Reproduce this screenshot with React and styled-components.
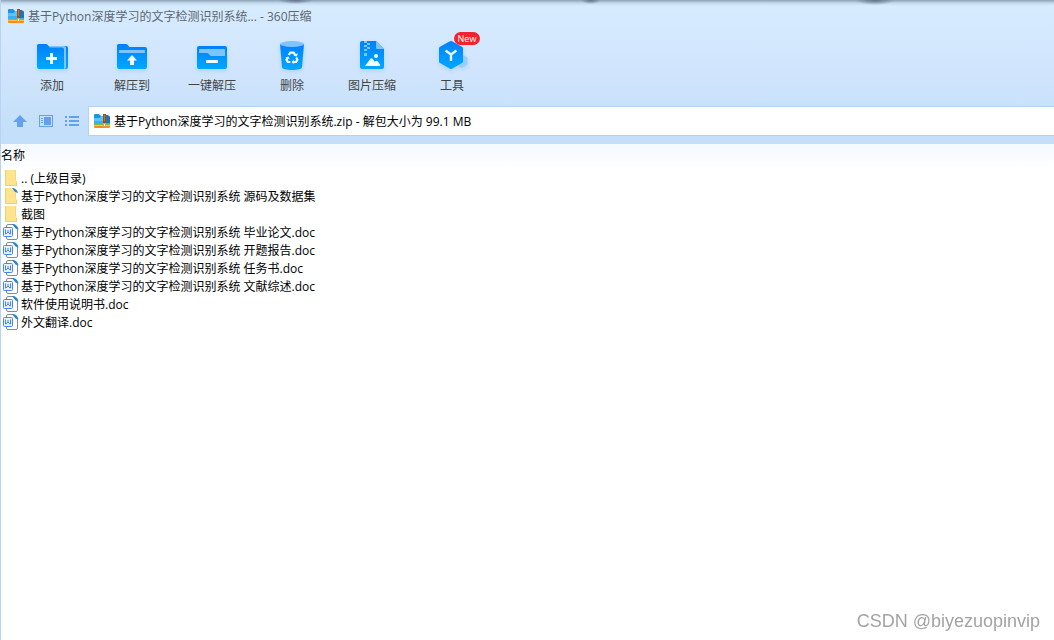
import { useId, useState } from "react"
import styled, { createGlobalStyle } from "styled-components"

const ARCHIVE = '基于Python深度学习的文字检测识别系统'

const files = [
  { name: '.. (上级目录)', type: 'folder' },
  { name: `${ARCHIVE} 源码及数据集`, type: 'folder', marked: true },
  { name: '截图', type: 'folder' },
  { name: `${ARCHIVE} 毕业论文.doc`, type: 'doc' },
  { name: `${ARCHIVE} 开题报告.doc`, type: 'doc' },
  { name: `${ARCHIVE} 任务书.doc`, type: 'doc' },
  { name: `${ARCHIVE} 文献综述.doc`, type: 'doc' },
  { name: '软件使用说明书.doc', type: 'doc' },
  { name: '外文翻译.doc', type: 'doc' },
]

const Gradient = ({ id }) => (
  <defs>
    <linearGradient id={id} x1="0" y1="0" x2="0" y2="1">
      <stop offset="0" stopColor="#0080ff" />
      <stop offset="1" stopColor="#00a8ff" />
    </linearGradient>
  </defs>
)

const AddIcon = () => {
  const id = useId()
  return (
    <svg width="32" height="32" viewBox="0 0 32 32" aria-hidden="true">
      <Gradient id={id} />
      <path d="M14 6h16a2 2 0 0 1 2 2v19a2 2 0 0 1-2 2H14z" fill={`url(#${id})`} />
      <path d="M12 6h16a2 2 0 0 1 2 2v19a2 2 0 0 1-2 2H12z" fill="#80c4ff" />
      <path d="M2.500 4H10a2 2 0 0 1 1.500.7l1.800 2.300a1.500 1.500 0 0 0 1.200.6H26a2 2 0 0 1 2 2V29H3a2 2 0 0 1-2-2V5.500A1.500 1.500 0 0 1 2.500 4z" fill={`url(#${id})`} />
      <path d="M14 13h3v4h4v3h-4v4h-3v-4h-4v-3h4z" fill="#f4fbff" />
    </svg>
  )
}

const ExtractIcon = () => {
  const id = useId()
  return (
    <svg width="32" height="32" viewBox="0 0 32 32" aria-hidden="true">
      <Gradient id={id} />
      <path d="M2.500 4H10a2 2 0 0 1 1.500.7L13 6.400A1.500 1.500 0 0 0 14 7h15a2 2 0 0 1 2 2v18a2 2 0 0 1-2 2H3a2 2 0 0 1-2-2V5.500A1.500 1.500 0 0 1 2.500 4z" fill={`url(#${id})`} />
      <path d="M3 11a1 1 0 0 1 1-1h24a1 1 0 0 1 1 1v2H3z" fill="#80c4ff" />
      <path d="M16 15l5 5.500h-3V25h-4v-4.500h-3z" fill="#f4fbff" />
    </svg>
  )
}

const OneClickIcon = () => {
  const id = useId()
  return (
    <svg width="32" height="32" viewBox="0 0 32 32" aria-hidden="true">
      <Gradient id={id} />
      <rect x="1" y="6" width="30" height="23" rx="2" fill={`url(#${id})`} />
      <path d="M3 10a1 1 0 0 1 1-1h24a1 1 0 0 1 1 1v6H15.500a2 2 0 0 1-1.400-.6l-1.600-1.700a2 2 0 0 0-1.500-.7H3z" fill="#80c4ff" />
      <rect x="10" y="20" width="12" height="3" rx="1" fill="#f4fbff" />
    </svg>
  )
}

const DeleteIcon = () => {
  const id = useId()
  return (
    <svg width="32" height="32" viewBox="0 0 32 32" aria-hidden="true">
      <Gradient id={id} />
      <path d="M4 4h24l-2 23.500C25.800 29 21 30 16 30S6.200 29 6 27.500z" fill={`url(#${id})`} />
      <ellipse cx="16" cy="4" rx="12" ry="3" fill="#80c4ff" />
      <g fill="none" stroke="#f0faff" strokeWidth="2.200">
        <path d="M12.800 15l1.500-2.400h3.400l1.500 2.400" />
        <path d="M20.200 17.500l1.200 2.200-1.300 2.300h-3" />
        <path d="M14.300 22h-2.500l-1.300-2.300 1.200-2.200" />
      </g>
      <path d="M17.400 15.800l3.700.6.500-3.500zM17.800 19.700L15.400 22l2.400 2.300zM9.400 17.600l3.100-1.200 1.100 2.900z" fill="#f0faff" />
    </svg>
  )
}

const ImageZipIcon = () => {
  const id = useId()
  return (
    <svg width="32" height="32" viewBox="0 0 32 32" aria-hidden="true">
      <Gradient id={id} />
      <path d="M6 1h14l8 8v18a2 2 0 0 1-2 2H6a2 2 0 0 1-2-2V3a2 2 0 0 1 2-2z" fill={`url(#${id})`} />
      <path d="M20 1l8 8h-7a1 1 0 0 1-1-1z" fill="#80c4ff" />
      <g fill="#80c4ff">
        <rect x="8" y="1" width="3" height="2" />
        <rect x="11" y="3" width="3" height="2" />
        <rect x="8" y="5" width="3" height="2" />
        <rect x="11" y="7" width="3" height="2" />
        <rect x="8" y="9" width="3" height="2" />
        <rect x="8" y="13" width="3" height="3" />
      </g>
      <circle cx="20" cy="16" r="2" fill="#f4fbff" />
      <path d="M9 26l5.300-7a1.500 1.500 0 0 1 2.400 0l2 2.700 1.200-.8a1.300 1.300 0 0 1 1.800.4L24 24.500c.5.900.1 1.500-.8 1.500z" fill="#f4fbff" />
    </svg>
  )
}

const ToolsIcon = () => {
  const id = useId()
  return (
    <svg width="32" height="32" viewBox="0 0 32 32" aria-hidden="true">
      <Gradient id={id} />
      <path d="M26 14.500l5.500 3v7L26 28l-6-3.500v-7z" fill="#9bcdfc" />
      <path d="M14 1.300a2 2 0 0 1 2 0l10 5.400a2 2 0 0 1 1 1.700v13a2 2 0 0 1-1 1.700l-10 5.600a2 2 0 0 1-2 0L4 23.100a2 2 0 0 1-1-1.700v-13a2 2 0 0 1 1-1.700z" fill={`url(#${id})`} />
      <path d="M9.500 10.500l5.500 4 5.500-4M15 14.500V21" fill="none" stroke="#e8f6ff" strokeWidth="2.400" />
    </svg>
  )
}

const ArchiveIcon = () => (
  <svg width="16" height="16" viewBox="0 0 16 16" aria-hidden="true">
    <path d="M0 2a1 1 0 0 1 1-1h4l2 2h8a1 1 0 0 1 1 1v8H0z" fill="#1e93de" />
    <path d="M0 5h6l1-2h8a1 1 0 0 1 1 1v7H0z" fill="#5ac4fa" />
    <path d="M0 8h16v3H0z" fill="#38b0f2" />
    <rect y="11" width="16" height="1" fill="#7ac143" />
    <path d="M0 12h16v2a1 1 0 0 1-1 1H1a1 1 0 0 1-1-1z" fill="#ff8a1c" />
    <rect y="12" width="16" height="1" fill="#ffc53a" />
    <path d="M12 2h2l2 2v6h-4z" fill="#2671b5" />
    <rect x="9" y="1" width="3" height="10" fill="#96521c" />
    <path d="M10 3h1M10 5h1M10 7h1" stroke="#e0a050" />
    <rect x="9.500" y="10.500" width="2" height="3" fill="#fff" stroke="#d8a64c" />
  </svg>
)

const FolderIcon = ({ marked }) => (
  <svg width="16" height="18" viewBox="0 0 16 18" aria-hidden="true">
    <path d="M2 1h11v10l1 2v4H2z" fill="#ffe48f" />
    <path d="M2.500 1v15.500h11.500M13.500 17v-4" fill="none" stroke="#f0cf70" />
    <path d="M12.500 1v10" stroke="#f3d781" />
    {marked && (
      <>
        <path d="M9 0h6v7h-2l-1-3z" fill="#fff" />
        <path d="M9 1c3 0 5.500 2 6 5l-3-1z" fill="#2788cd" />
      </>
    )}
  </svg>
)

const DocIcon = () => (
  <svg width="16" height="18" viewBox="0 0 16 18" aria-hidden="true">
    <path d="M3.500 4V3A1.500 1.500 0 0 1 5 1.500h5L14.500 6v9a1.500 1.500 0 0 1-1.500 1.500H5A1.500 1.500 0 0 1 3.500 15v-1" fill="#fff" stroke="#858c94" />
    <path d="M9 0h6v5z" fill="#fff" />
    <path d="M9 1c3.500 0 6 2 6.500 5.500l-3-1z" fill="#2788cd" />
    <rect x=".5" y="4.500" width="9" height="9" rx="1" fill="#e6f0ff" stroke="#4a86e8" />
    <path d="M2.500 6.500v4.500h.6l1.900-2 1.900 2h.6V6.500M5 7v2" fill="none" stroke="#4a86e8" />
  </svg>
)

const tools = [
  { label: '添加', icon: <AddIcon /> },
  { label: '解压到', icon: <ExtractIcon /> },
  { label: '一键解压', icon: <OneClickIcon /> },
  { label: '删除', icon: <DeleteIcon /> },
  { label: '图片压缩', icon: <ImageZipIcon /> },
  { label: '工具', icon: <ToolsIcon />, badge: 'New' },
]

const App = () => {
  const [path, setPath] = useState(`${ARCHIVE}.zip - 解包大小为 99.1 MB`)

  return (
    <>
      <GlobalStyle />
      <StyledWindow>
        <StyledHeader>
          <StyledTitle>
            <ArchiveIcon />
            <h1>基于Python深度学习的文字检测识别系统... - 360压缩</h1>
          </StyledTitle>
          <StyledToolbar>
            {tools.map(tool => (
              <StyledTool key={tool.label}>
                {tool.icon}
                <span>{tool.label}</span>
                {tool.badge && <StyledBadge>{tool.badge}</StyledBadge>}
              </StyledTool>
            ))}
          </StyledToolbar>
          <StyledAddressRow>
            <StyledNavButton aria-label="上级目录">
              <svg width="14" height="14" viewBox="0 0 14 14">
                <path d="M7 1l7 7h-4v5H4V8H0z" fill="#64a0f0" />
              </svg>
            </StyledNavButton>
            <StyledNavButton aria-label="预览">
              <svg width="14" height="14" viewBox="0 0 14 14">
                <rect x=".5" y="1.500" width="13" height="11" fill="none" stroke="#64a0f0" />
                <path d="M2 4h2v1H2zM2 6h2v1H2zM2 8h2v1H2zM5 3h7v8H5z" fill="#64a0f0" />
              </svg>
            </StyledNavButton>
            <StyledNavButton aria-label="列表">
              <svg width="14" height="14" viewBox="0 0 14 14">
                <path d="M0 2h2v2H0zM4 2h10v2H4zM0 6h2v2H0zM4 6h10v2H4zM0 10h2v2H0zM4 10h10v2H4z" fill="#64a0f0" />
              </svg>
            </StyledNavButton>
            <StyledAddress>
              <ArchiveIcon />
              <input aria-label="地址" value={path} onChange={e => setPath(e.target.value)} />
            </StyledAddress>
          </StyledAddressRow>
        </StyledHeader>
        <StyledTable>
          <thead>
            <tr>
              <th>名称</th>
            </tr>
          </thead>
          <tbody>
            {files.map(file => (
              <tr key={file.name}>
                <td>
                  <StyledFile>
                    {file.type === 'doc' ? <DocIcon /> : <FolderIcon marked={file.marked} />}
                    <span>{file.name}</span>
                  </StyledFile>
                </td>
              </tr>
            ))}
          </tbody>
        </StyledTable>
      </StyledWindow>
      <StyledWatermark>CSDN @biyezuopinvip</StyledWatermark>
    </>
  )
}

export default App

const GlobalStyle = createGlobalStyle`
  * {
    box-sizing: border-box;
  }
  body {
    margin: 0;
    background: #fff;
  }
  body, button, input {
    font-family: "Open Sans", "Noto Sans CJK SC", sans-serif;
    font-size: 12px;
    line-height: 18px;
    color: #000;
  }
  svg {
    display: block;
    flex-shrink: 0;
  }
`
const StyledWindow = styled.main`
  min-height: 100vh;
  border-left: 1px solid #b7d5f3;
`
const StyledHeader = styled.header`
  padding-bottom: 8px;
  background:
    radial-gradient(18px 4px at 28% 0, #60738a, transparent),
    radial-gradient(10px 4px at 56% 0, #60738a, transparent),
    radial-gradient(20px 5px at 83% 0, #60738a, transparent),
    linear-gradient(#8ea2b5, #c4d8eb 3px, transparent 6px),
    linear-gradient(#d8ecff, #d0e5fd 50%, #c3dff9 92%, #c3dff9);
`
const StyledTitle = styled.div`
  display: flex;
  align-items: center;
  gap: 4px;
  height: 32px;
  padding-left: 7px;
  h1 {
    margin: 0;
    padding-top: 2px;
    font-size: 12px;
    font-weight: normal;
    color: #5c6670;
  }
`
const StyledToolbar = styled.div`
  display: flex;
  height: 74px;
  padding: 8px 0 0 11px;
`
const StyledTool = styled.button`
  position: relative;
  display: flex;
  flex-direction: column;
  align-items: center;
  gap: 5px;
  width: 80px;
  padding: 0;
  border: 0;
  background: none;
  color: #444;
  svg {
    filter: drop-shadow(0 2px 2px rgba(60, 140, 230, 0.2));
  }
`
const StyledBadge = styled.span`
  position: absolute;
  top: -8px;
  left: 42px;
  width: 26px;
  height: 13px;
  border-radius: 7px;
  background: #f5222d;
  color: #fff;
  font-size: 9px;
  line-height: 13px;
  text-align: center;
`
const StyledAddressRow = styled.div`
  display: flex;
  align-items: center;
  gap: 12px;
  padding-left: 12px;
`
const StyledNavButton = styled.button`
  padding: 0;
  border: 0;
  background: none;
`
const StyledAddress = styled.label`
  display: flex;
  flex: 1;
  align-items: center;
  gap: 4px;
  height: 30px;
  margin-left: -3px;
  padding-left: 5px;
  border: 1px solid #b5d3f0;
  border-right: 0;
  background: #fff;
  input {
    flex: 1;
    padding: 2px 0 0;
    border: 0;
    outline: 0;
    background: none;
  }
`
const StyledTable = styled.table`
  width: 100%;
  border-collapse: collapse;
  th {
    height: 25px;
    padding: 0 0 2px;
    background: linear-gradient(#f3f9ff, #fff);
    font-weight: normal;
    text-align: left;
  }
  td {
    padding: 0;
  }
`
const StyledFile = styled.div`
  display: flex;
  align-items: center;
  gap: 2px;
  height: 18px;
  padding-left: 2px;
  white-space: pre;
  span {
    padding-top: 2px;
  }
`
const StyledWatermark = styled.div`
  position: fixed;
  right: 14px;
  bottom: 8px;
  font-family: "Liberation Sans", sans-serif;
  font-size: 18px;
  line-height: 22px;
  color: #a3a3a3;
`
